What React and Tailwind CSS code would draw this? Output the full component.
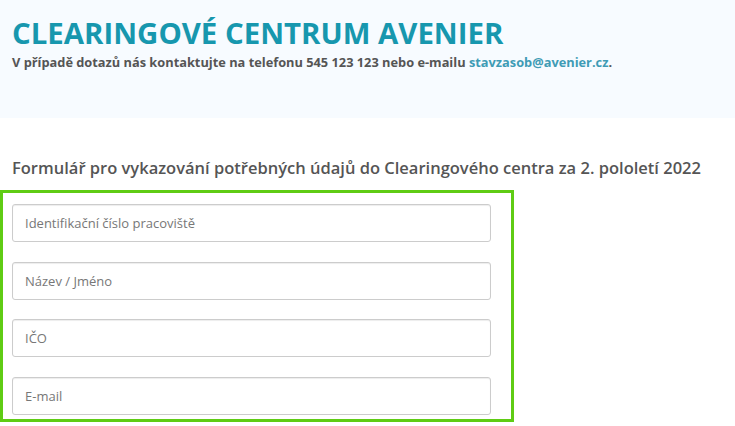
import React from 'react';

const fields = ['Identifikační číslo pracoviště', 'Název / Jméno', 'IČO', 'E-mail'];

export default function App() {
  return (
    <div className="min-h-screen bg-white" style={{ fontFamily: '"Open Sans", sans-serif' }}>
      {/* Header */}
      <div className="h-[118px] bg-[#f7fbff] px-[12px] pt-[14px]">
        <h1 className="text-[29.4px] leading-[38px] font-bold text-[#1797ae]">
          CLEARINGOVÉ CENTRUM AVENIER
        </h1>
        <p className="text-[12.8px] leading-[20px] font-bold text-[#555]">
          V případě dotazů nás kontaktujte na telefonu 545 123 123 nebo e-mailu{' '}
          <a className="text-[#3f9bb5]">stavzasob@avenier.cz</a>.
        </p>
      </div>

      {/* Form */}
      <div className="pt-[38px]">
        <h2 className="px-[12px] text-[16.5px] leading-[24px] font-semibold text-[#555]">
          Formulář pro vykazování potřebných údajů do Clearingového centra za 2. pololetí 2022
        </h2>
        <div className="mt-[10px] w-[514px] border-[3px] border-[#5fcc14] pl-[9px] pt-[11px] pb-[4px] flex flex-col gap-[19.7px]">
          {fields.map((f) => (
            <input
              key={f}
              placeholder={f}
              className="w-[479px] h-[38px] rounded-[3px] border border-[#ccc] px-[12px] text-[13px] placeholder:text-[#777] shadow-[inset_0_1px_1px_rgba(0,0,0,0.075)] outline-none"
            />
          ))}
        </div>
      </div>
    </div>
  );
}
